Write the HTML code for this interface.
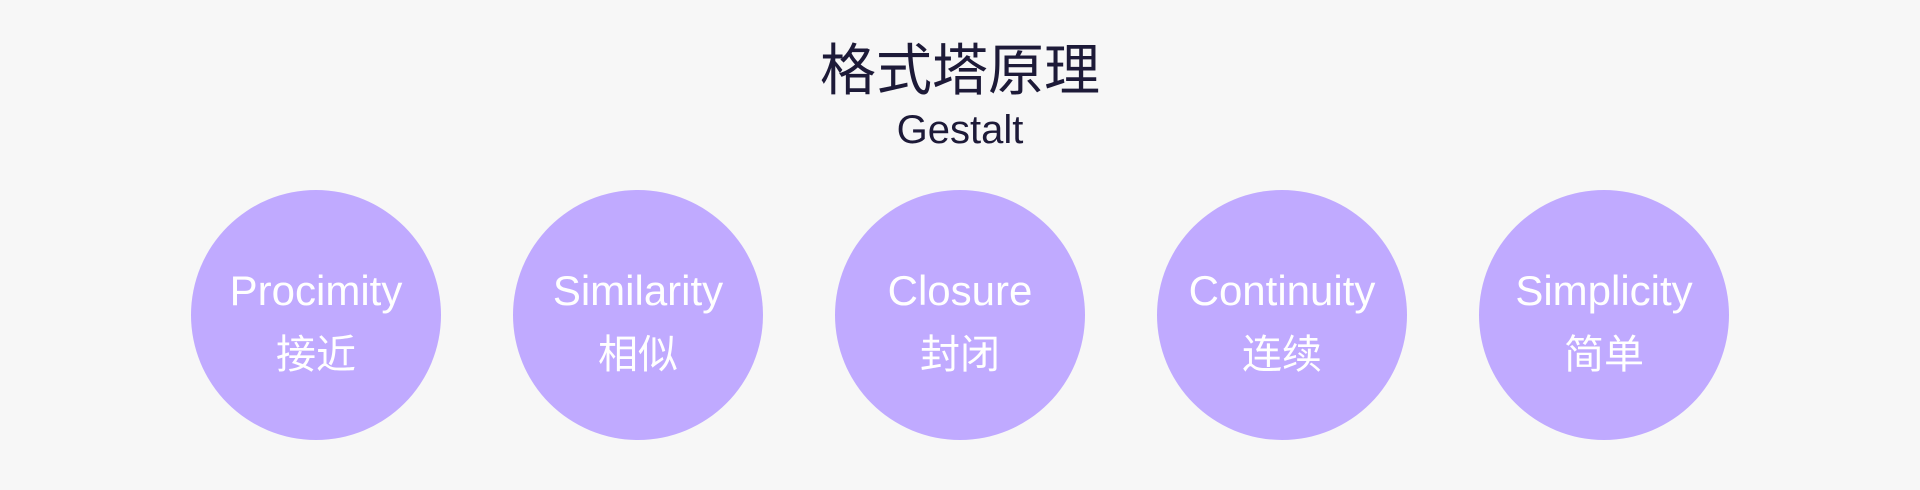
<!DOCTYPE html>
<html><head><meta charset="utf-8"><style>
html,body{margin:0;padding:0}
body{width:1920px;height:490px;background:#f7f7f7;position:relative;overflow:hidden;font-family:"Liberation Sans","Noto Sans CJK SC",sans-serif}
.t1{position:absolute;left:0;width:1920px;top:38px;text-align:center;font-size:56px;line-height:66px;color:#1d1a38;font-family:"Liberation Sans","Noto Sans CJK SC",sans-serif}
.t2{position:absolute;left:0;width:1920px;top:108px;text-align:center;font-size:40px;line-height:44px;color:#1d1a38}
.c{position:absolute;top:190px;width:250px;height:250px;border-radius:50%;background:#c0aaff;color:#fff;text-align:center}
.e{position:absolute;top:78px;left:0;width:250px;font-size:42px;line-height:46px}
.z{position:absolute;top:141px;left:0;width:250px;font-size:40px;line-height:48px}
</style></head><body>
<div class="t1">格式塔原理</div>
<div class="t2">Gestalt</div>
<div class="c" style="left:191px"><div class="e">Procimity</div><div class="z">接近</div></div>
<div class="c" style="left:513px"><div class="e">Similarity</div><div class="z">相似</div></div>
<div class="c" style="left:835px"><div class="e">Closure</div><div class="z">封闭</div></div>
<div class="c" style="left:1157px"><div class="e">Continuity</div><div class="z">连续</div></div>
<div class="c" style="left:1479px"><div class="e">Simplicity</div><div class="z">简单</div></div>
</body></html>
